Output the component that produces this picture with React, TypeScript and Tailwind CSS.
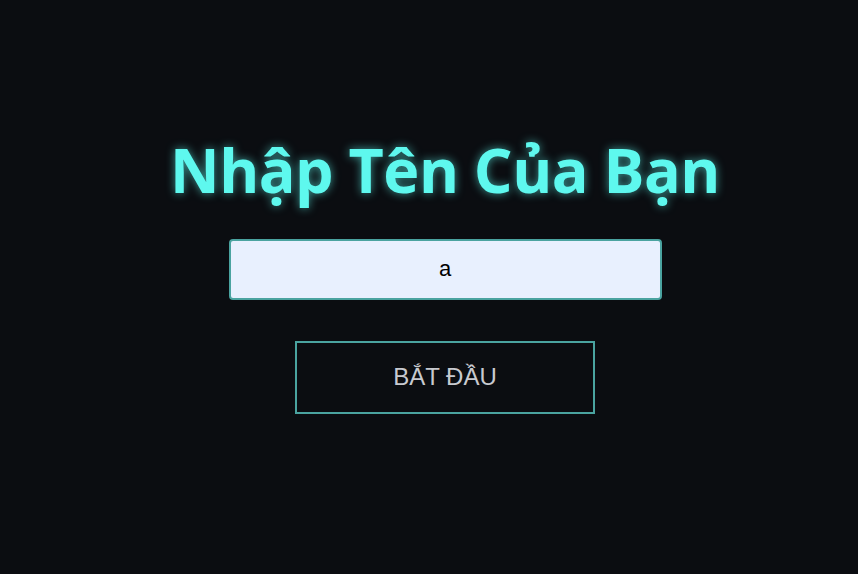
export default function App() {
  return (
    <div className="min-h-screen bg-[#0b0d11] flex flex-col items-center justify-center pl-[32px] pb-[22px]">
      <h1
        className="font-['Open_Sans',sans-serif] font-bold text-[61px] leading-none text-[#5ef8ee] tracking-[-0.5px] [text-shadow:0_0_10px_rgba(94,248,238,0.6)]"
      >
        Nhập Tên Của Bạn
      </h1>
      <input
        defaultValue="a"
        className="mt-[39px] w-[433px] h-[61px] rounded-[4px] border-2 border-[#4aa3a0] bg-[#e8f0fe] text-center text-[22px] text-black font-['Liberation_Sans',sans-serif] outline-none"
      />
      <button className="mt-[41px] w-[300px] h-[73px] border-2 border-[#4aa3a0] bg-transparent text-[24px] text-[#c8cad0] font-['Liberation_Sans',sans-serif]">
        BẮT ĐẦU
      </button>
    </div>
  );
}
